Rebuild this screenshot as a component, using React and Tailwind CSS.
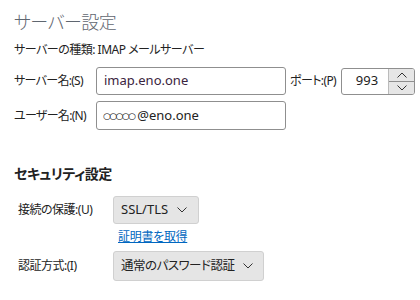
import React from "react";

const font = { fontFamily: '"Noto Sans", "Noto Sans CJK JP", sans-serif' };

function Chevron({ className = "" }) {
  return (
    <svg width="10" height="6" viewBox="0 0 10 6" className={className}>
      <path d="M0.5 0.5 L5 5 L9.5 0.5" fill="none" stroke="#333" strokeWidth="1" />
    </svg>
  );
}

export default function App() {
  return (
    <div
      className="w-[420px] h-[300px] bg-white text-[#222] overflow-hidden relative flex flex-col pl-[14px] pt-[8px] whitespace-nowrap [font-feature-settings:'palt']"
      style={font}
    >
      <div className="text-[18px] leading-[28px] font-light text-[#5f6670] tracking-[-0.5px]">サーバー設定</div>
      <div className="text-[12px] leading-[18px] mt-[5px] tracking-[-0.5px]">サーバーの種類: IMAP メールサーバー</div>

      <div className="flex items-center mt-[8px] h-[28px]">
        <div className="w-[82px] shrink-0 text-[12px] tracking-[-0.7px]">サーバー名:(S)</div>
        <div className="w-[190px] shrink-0 h-[28px] border border-[#8f8f8f] rounded-[3px] flex items-center px-[7px] text-[13px] text-[#3a2440]">
          imap.eno.one
        </div>
        <div className="ml-[4px] shrink-0 text-[12px] tracking-[-0.6px]">ポート:(P)</div>
        <div className="ml-[5px] shrink-0 w-[74px] h-[27px] border border-[#8f8f8f] rounded-[3px] flex overflow-hidden">
          <div className="flex-1 flex items-center justify-end pr-[10px] text-[13px]">993</div>
          <div className="w-[26px] flex flex-col bg-[#e6e6e6] border-l border-[#bbb]">
            <div className="flex-1 flex items-center justify-center border-b border-[#8f8f8f]">
              <Chevron className="rotate-180" />
            </div>
            <div className="flex-1 flex items-center justify-center">
              <Chevron />
            </div>
          </div>
        </div>
      </div>

      <div className="flex items-center mt-[6px] h-[29px]">
        <div className="w-[82px] shrink-0 text-[12px] tracking-[-0.7px]">ユーザー名:(N)</div>
        <div className="w-[190px] shrink-0 h-[29px] border border-[#8f8f8f] rounded-[3px] flex items-center px-[6px] text-[13px] text-[#222]">
          <span className="font-['DejaVu_Sans',sans-serif] text-[9px] tracking-[-1.6px] mr-[3px] mt-[2px] text-[#111]">○○○○○</span>@eno.one
        </div>
      </div>

      <div className="mt-[34px] text-[14px] leading-[20px] font-bold tracking-[-0.5px]">セキュリティ設定</div>

      <div className="flex items-center mt-[12px] pl-[4px]">
        <div className="w-[95px] shrink-0 text-[12px] tracking-[-0.5px]">接続の保護:(U)</div>
        <div className="w-[86px] shrink-0 h-[28px] bg-[#e5e5e5] border border-[#d0d0d0] rounded-[3px] flex items-center justify-between pl-[7px] pr-[11px] text-[13px]">
          <span>SSL/TLS</span>
          <Chevron />
        </div>
      </div>
      <div className="pl-[104px] mt-[5px] text-[12px] leading-[16px] text-[#0067c0] underline tracking-[-0.3px]">証明書を取得</div>

      <div className="flex items-center mt-[6px] pl-[4px]">
        <div className="w-[95px] shrink-0 text-[12px] tracking-[-0.5px]">認証方式:(I)</div>
        <div className="w-[151px] shrink-0 h-[30px] bg-[#e5e5e5] border border-[#d0d0d0] rounded-[3px] flex items-center justify-between pl-[7px] pr-[10px] text-[12.5px] tracking-[-0.5px]">
          <span>通常のパスワード認証</span>
          <Chevron />
        </div>
      </div>
    </div>
  );
}
